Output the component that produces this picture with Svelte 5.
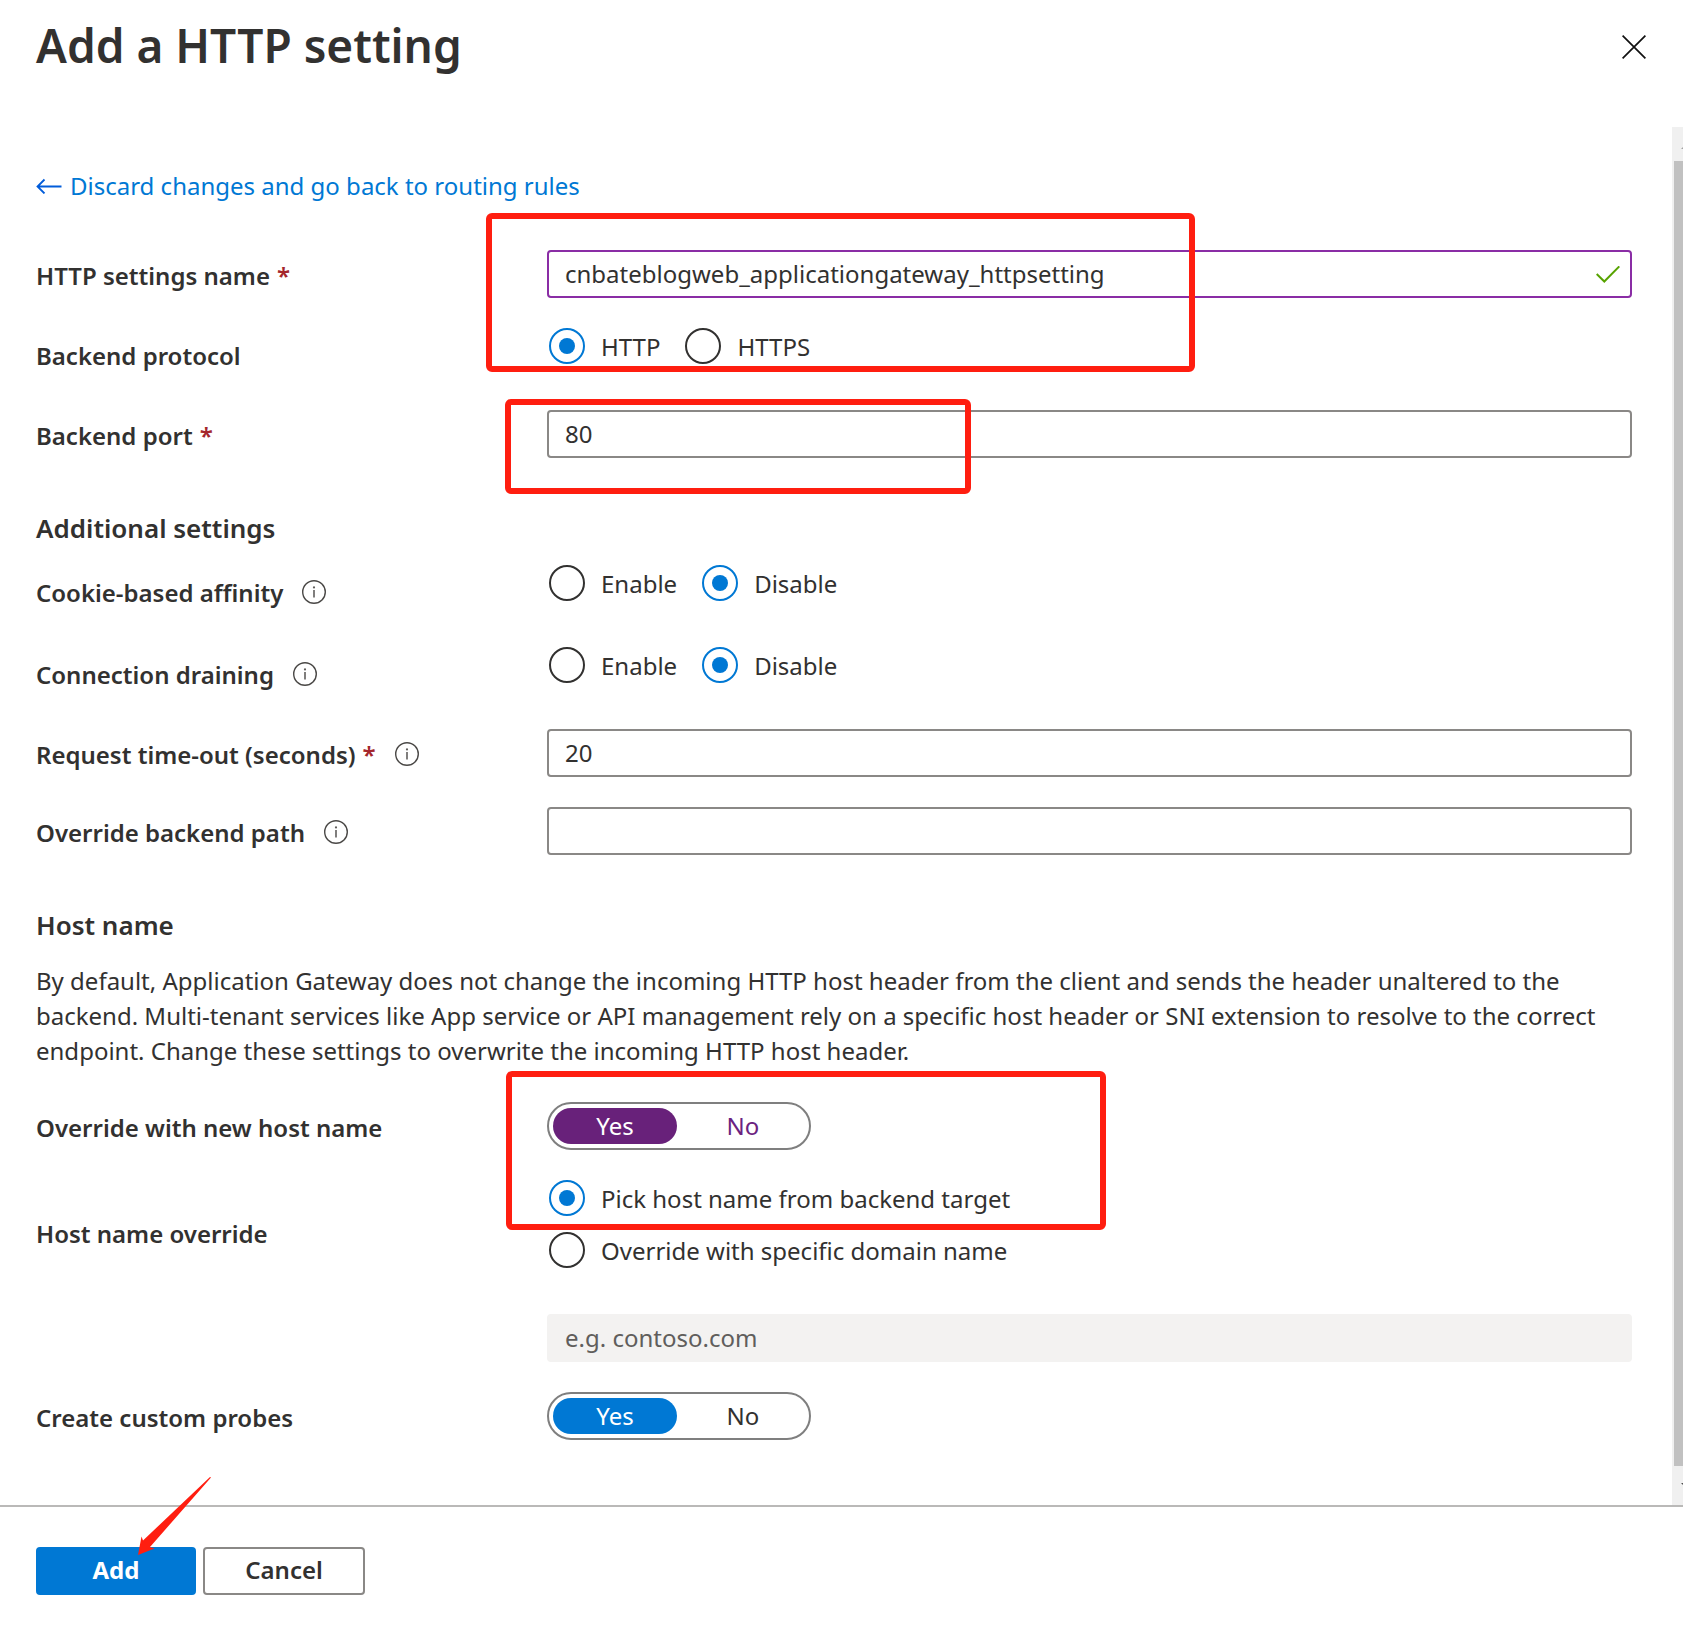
<script>
  let settingsName = 'cnbateblogweb_applicationgateway_httpsetting';
  let protocol = 'HTTP';
  let port = '80';
  let affinity = 'Disable';
  let draining = 'Disable';
  let timeout = '20';
  let backendPath = '';
  let overrideHost = true;
  let hostSource = 'pick';
  let customProbes = true;

  const description =
    'By default, Application Gateway does not change the incoming HTTP host header from the client and sends the header unaltered to the backend. Multi-tenant services like App service or API management rely on a specific host header or SNI extension to resolve to the correct endpoint. Change these settings to overwrite the incoming HTTP host header.';

  const hostSources = [
    { value: 'pick', label: 'Pick host name from backend target' },
    { value: 'specific', label: 'Override with specific domain name' }
  ];
</script>

{#snippet info()}
  <svg class="info" width="24" height="24" viewBox="0 0 24 24" aria-hidden="true">
    <circle cx="12" cy="12" r="11.3" fill="none" stroke="#4a4846" stroke-width="1.4" />
    <path d="M12 10v7.5" stroke="#605e5c" stroke-width="1.6" />
    <circle cx="12" cy="7.4" r="1.1" fill="#605e5c" />
  </svg>
{/snippet}

<div class="blade">
  <header>
    <h1>Add a HTTP setting</h1>
    <button class="close" type="button" aria-label="Close">
      <svg width="24" height="24" viewBox="0 0 24 24">
        <path d="M.6 .6l22.8 22.8M23.4 .6L.6 23.4" stroke="#111" stroke-width="1.7" />
      </svg>
    </button>
  </header>

  <div class="body">
    <main>
      <a class="back" href="#rules">
        <svg width="26" height="16" viewBox="0 0 26 16" aria-hidden="true">
          <path d="M25.5 8.5H2M8.5 1.5l-7 7 7 7" fill="none" stroke="#015cda" stroke-width="1.8" />
        </svg>
        Discard changes and go back to routing rules
      </a>

      <div class="rows first">
        <div class="row">
          <label class="name" for="settings-name">HTTP settings name <span class="required">*</span></label>
          <div class="field">
            <input id="settings-name" class="text valid" type="text" bind:value={settingsName} />
            <svg class="check" width="24" height="17" viewBox="0 0 24 17" aria-hidden="true">
              <path d="M.7 8L8.3 15.5 23.3 .4" fill="none" stroke="#57a300" stroke-width="2" />
            </svg>
          </div>
        </div>
        <div class="row">
          <span class="name tall" id="protocol-label">Backend protocol</span>
          <div class="radios" role="radiogroup" aria-labelledby="protocol-label">
            {#each ['HTTP', 'HTTPS'] as option}
              <label><input type="radio" name="protocol" value={option} bind:group={protocol} />{option}</label>
            {/each}
          </div>
        </div>
        <div class="row">
          <label class="name" for="port">Backend port <span class="required">*</span></label>
          <input id="port" class="text" type="text" bind:value={port} />
        </div>
        <div class="mark mark-name"></div>
        <div class="mark mark-port"></div>
      </div>

      <h2>Additional settings</h2>
      <div class="rows">
        <div class="row">
          <span class="name tall" id="affinity-label">Cookie-based affinity {@render info()}</span>
          <div class="radios" role="radiogroup" aria-labelledby="affinity-label">
            {#each ['Enable', 'Disable'] as option}
              <label><input type="radio" name="affinity" value={option} bind:group={affinity} />{option}</label>
            {/each}
          </div>
        </div>
        <div class="row">
          <span class="name tall" id="draining-label">Connection draining {@render info()}</span>
          <div class="radios" role="radiogroup" aria-labelledby="draining-label">
            {#each ['Enable', 'Disable'] as option}
              <label><input type="radio" name="draining" value={option} bind:group={draining} />{option}</label>
            {/each}
          </div>
        </div>
        <div class="row">
          <label class="name" for="timeout">Request time-out (seconds) <span class="required">*</span> {@render info()}</label>
          <input id="timeout" class="text" type="text" bind:value={timeout} />
        </div>
        <div class="row">
          <label class="name" for="path">Override backend path {@render info()}</label>
          <input id="path" class="text" type="text" bind:value={backendPath} />
        </div>
      </div>

      <h2>Host name</h2>
      <p>{description}</p>
      <div class="rows">
        <div class="row">
          <span class="name" id="override-label">Override with new host name</span>
          <div class="toggle focused" role="group" aria-labelledby="override-label">
            <button type="button" aria-pressed={overrideHost} on:click={() => (overrideHost = true)}>Yes</button>
            <button type="button" aria-pressed={!overrideHost} on:click={() => (overrideHost = false)}>No</button>
          </div>
        </div>
        <div class="row">
          <span class="name double" id="source-label">Host name override</span>
          <div class="radios stacked" role="radiogroup" aria-labelledby="source-label">
            {#each hostSources as source}
              <label><input type="radio" name="source" value={source.value} bind:group={hostSource} />{source.label}</label>
            {/each}
          </div>
        </div>
        <div class="row">
          <span class="name"></span>
          <input class="text" type="text" placeholder="e.g. contoso.com" aria-label="Host name" disabled={hostSource === 'pick'} />
        </div>
        <div class="row">
          <span class="name" id="probes-label">Create custom probes</span>
          <div class="toggle" role="group" aria-labelledby="probes-label">
            <button type="button" aria-pressed={customProbes} on:click={() => (customProbes = true)}>Yes</button>
            <button type="button" aria-pressed={!customProbes} on:click={() => (customProbes = false)}>No</button>
          </div>
        </div>
        <div class="mark mark-host"></div>
      </div>
    </main>

    <div class="scrollbar" aria-hidden="true">
      <svg width="11" height="34" viewBox="0 0 11 34"><path d="M9 22l5-5v5z" fill="#a3a3a3" /></svg>
      <div class="thumb"></div>
      <svg width="11" height="39" viewBox="0 0 11 39"><path d="M9 17h5v5z" fill="#505050" /></svg>
    </div>
  </div>

  <footer>
    <button class="primary" type="button">Add</button>
    <button class="secondary" type="button">Cancel</button>
    <svg class="arrow" width="74" height="80" viewBox="0 0 74 80" aria-hidden="true">
      <path d="M73 .5L72 0 5 63.5 3.5 59.5 0 78 16.5 71.5 12 70z" fill="#ff1e10" />
    </svg>
  </footer>
</div>

<style>
  :global(body) {
    margin: 0;
    background: #fff;
  }
  .blade {
    display: flex;
    flex-direction: column;
    min-height: 100vh;
    color: #323130;
    font-family: "Noto Sans", "Open Sans", sans-serif;
    font-size: 24px;
  }
  button,
  input {
    font: inherit;
    color: inherit;
    box-sizing: border-box;
    margin: 0;
  }
  header {
    display: flex;
    align-items: flex-start;
    justify-content: space-between;
    height: 127px;
    padding: 0 37px 0 36px;
  }
  h1,
  h2,
  .name,
  footer {
    font-weight: 600;
  }
  h1 {
    margin: 0;
    font-size: 46px;
    line-height: 90px;
  }
  .close {
    display: flex;
    margin-top: 23px;
    padding: 12px;
    margin-right: -12px;
    border: none;
    background: none;
    cursor: pointer;
  }
  .body {
    display: flex;
    flex: 1;
  }
  main {
    flex: 1;
    padding: 36px 40px 61px 36px;
  }
  .back {
    display: flex;
    align-items: center;
    gap: 8px;
    line-height: 46px;
    color: #0078d4;
    text-decoration: none;
  }
  .rows {
    position: relative;
    display: flex;
    flex-direction: column;
    gap: 28px;
  }
  .first {
    margin-top: 41px;
  }
  .row {
    display: grid;
    grid-template-columns: 511px 1fr;
    align-items: start;
  }
  .name {
    display: flex;
    align-items: center;
    gap: 7px;
    height: 50px;
  }
  .tall {
    height: 54px;
  }
  .double {
    height: 106px;
  }
  .required {
    color: #a4262c;
  }
  .info {
    margin-left: 12px;
  }
  .field {
    position: relative;
  }
  .text {
    width: 100%;
    height: 48px;
    padding: 0 16px 2px;
    border: 2px solid #8a8886;
    border-radius: 4px;
    background: #fff;
    outline: none;
  }
  .valid {
    border-color: #8a2da5;
  }
  .text:disabled {
    border-color: #f3f2f1;
    background: #f3f2f1;
  }
  .text::placeholder {
    color: #605e5c;
    opacity: 1;
  }
  .check {
    position: absolute;
    top: 16px;
    right: 12px;
  }
  .radios {
    display: flex;
    gap: 25px;
    padding-left: 2px;
  }
  .stacked {
    flex-direction: column;
    gap: 16px;
  }
  .radios label {
    display: flex;
    align-items: center;
    gap: 16px;
    height: 36px;
  }
  .radios input {
    display: grid;
    place-items: center;
    width: 36px;
    height: 36px;
    border: 2px solid #323130;
    border-radius: 50%;
    background: #fff;
    appearance: none;
  }
  .radios input:checked {
    border-color: #0078d4;
  }
  .radios input:checked::before {
    content: "";
    width: 16px;
    height: 16px;
    border-radius: 50%;
    background: #0078d4;
  }
  h2 {
    margin: 48px 0 17px;
    font-size: 26px;
    line-height: 40px;
  }
  p {
    margin: 18px 0 34px;
    line-height: 35px;
  }
  .toggle {
    display: flex;
    justify-content: space-between;
    box-sizing: border-box;
    width: 264px;
    height: 48px;
    padding: 4px;
    border: 2px solid #7f7f7f;
    border-radius: 24px;
  }
  .toggle button {
    width: 124px;
    padding: 0;
    border: none;
    border-radius: 18px;
    background: none;
    line-height: 36px;
  }
  .toggle button[aria-pressed="true"] {
    background: #0078d4;
    color: #fff;
  }
  .focused button {
    color: #6b2280;
  }
  .focused button[aria-pressed="true"] {
    background: #68217a;
  }
  /* review marks drawn over the form */
  .mark {
    position: absolute;
    box-sizing: border-box;
    border: 6px solid #ff1e10;
    border-radius: 6px;
    pointer-events: none;
  }
  .mark-name {
    top: -37px;
    left: 450px;
    width: 709px;
    height: 159px;
  }
  .mark-port {
    top: 149px;
    left: 469px;
    width: 466px;
    height: 95px;
  }
  .mark-host {
    top: -31px;
    left: 470px;
    width: 600px;
    height: 159px;
  }
  .scrollbar {
    display: flex;
    flex-direction: column;
    width: 11px;
    background: #f0f0f0;
  }
  .thumb {
    flex: 1;
    margin-left: 2px;
    background: #c1c1c1;
  }
  footer {
    position: relative;
    display: flex;
    gap: 7px;
    padding: 40px 36px 31px;
    border-top: 2px solid #bab9b8;
  }
  footer button {
    width: 162px;
    height: 48px;
    border: 2px solid #8a8886;
    border-radius: 4px;
    background: #fff;
    line-height: 40px;
    padding: 0 0 2px;
  }
  footer .primary {
    width: 160px;
    border-color: #0078d4;
    background: #0078d4;
    color: #fff;
    font-weight: 700;
  }
  .arrow {
    position: absolute;
    top: -30px;
    left: 138px;
  }
</style>
